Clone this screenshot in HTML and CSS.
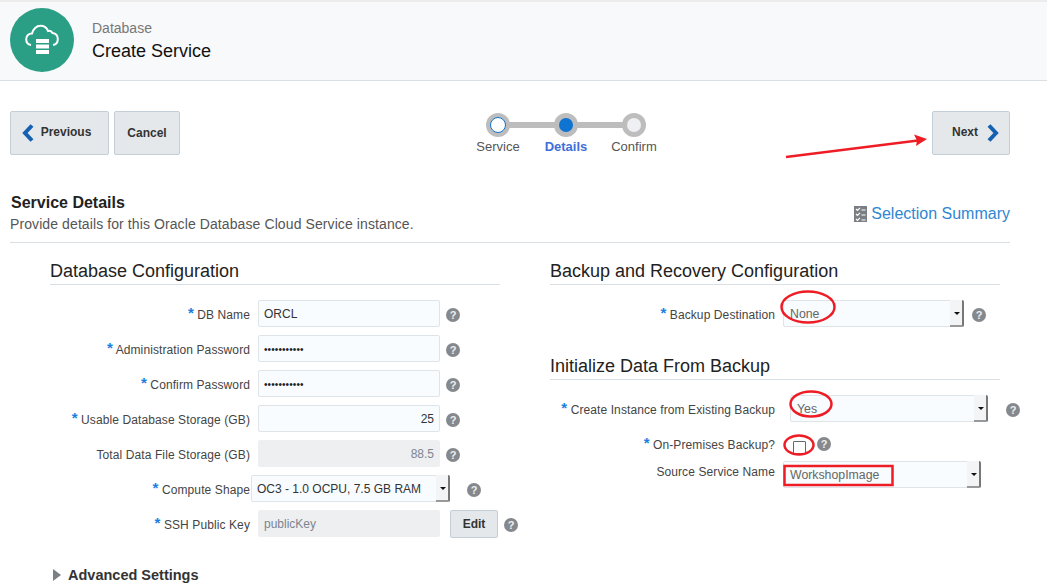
FILE: index.html
```html
<!DOCTYPE html>
<html lang="en">

<head>
    <meta charset="utf-8" />
    <title>Create Service</title>
    <link rel="stylesheet" href="styles.css">
</head>

<body>
    <div class="page">
        <header class="pageHeader">
            <div class="logo">
                <svg width="36" height="36" viewBox="0 0 36 36">
                    <path d="M7 23 C4 22.500 2.200 20 2.200 17 C2.200 13.800 4.800 11.300 8 11.500 C9 7 12.500 3.700 16.500 3.700 C20 3.700 22.800 5.800 24 9 C25.500 8.500 27.500 9 28.500 11 C31.800 11.500 33.800 14 33.800 17 C33.800 20 32 22.500 29 23" fill="none" stroke="#fff" stroke-width="2" />
                    <rect x="12" y="17" width="13" height="4" fill="#fff" />
                    <rect x="12" y="22.500" width="13" height="4" fill="#fff" />
                    <rect x="12" y="28" width="13" height="4" fill="#fff" />
                </svg>
            </div>
            <div class="titles">
                <div class="crumb">Database</div>
                <div class="pageTitle">Create Service</div>
            </div>
        </header>

        <div class="toolBar">
            <div class="navLeft">
                <button class="btn btnPrev">
                    <svg width="14" height="18" viewBox="0 0 14 18"><path d="M10 1.500 L3 9 L10 16.500" fill="none" stroke="#1560b0" stroke-width="4" /></svg>
                    Previous
                </button>
                <button class="btn btnCancel">Cancel</button>
            </div>
            <div class="train">
                <div class="trainLine"></div>
                <div class="stop">
                    <span class="dot dotVisited"></span>
                    <span class="stopLabel">Service</span>
                </div>
                <div class="stop">
                    <span class="dot dotCurrent"></span>
                    <span class="stopLabel stopCurrent">Details</span>
                </div>
                <div class="stop">
                    <span class="dot dotNext"></span>
                    <span class="stopLabel">Confirm</span>
                </div>
            </div>
            <button class="btn btnNext">
                Next
                <svg width="14" height="18" viewBox="0 0 14 18"><path d="M4 1.500 L11 9 L4 16.500" fill="none" stroke="#1560b0" stroke-width="4" /></svg>
            </button>
        </div>

        <section class="details">
            <div class="detailsHead">
                <div>
                    <h2 class="detailsTitle">Service Details</h2>
                    <p class="detailsSub">Provide details for this Oracle Database Cloud Service instance.</p>
                </div>
                <a class="summaryLink">
                    <svg width="13" height="16" viewBox="0 0 13 16">
                        <rect width="13" height="16" fill="#7b7f83" />
                        <path d="M2 3 L3.500 4.500 L6 1.800 M2 8 L3.500 9.500 L6 6.800 M2 13 L3.500 14.500 L6 11.800" fill="none" stroke="#fff" stroke-width="1.200" />
                        <path d="M7.500 4 H11.500 M7.500 9 H11.500 M7.500 14 H11.500" stroke="#fff" stroke-width="1.200" />
                    </svg>
                    Selection Summary
                </a>
            </div>
        </section>

        <main class="columns">
            <div class="column">
                <h3 class="groupTitle">Database Configuration</h3>
                <div class="formRow">
                    <label class="fieldLabel"><span class="req">*</span> DB Name</label>
                    <div class="input">ORCL</div>
                    <span class="help">?</span>
                </div>
                <div class="formRow">
                    <label class="fieldLabel"><span class="req">*</span> Administration Password</label>
                    <div class="input inputPwd">•••••••••••</div>
                    <span class="help">?</span>
                </div>
                <div class="formRow">
                    <label class="fieldLabel"><span class="req">*</span> Confirm Password</label>
                    <div class="input inputPwd">•••••••••••</div>
                    <span class="help">?</span>
                </div>
                <div class="formRow">
                    <label class="fieldLabel"><span class="req">*</span> Usable Database Storage (GB)</label>
                    <div class="input inputNum">25</div>
                    <span class="help">?</span>
                </div>
                <div class="formRow">
                    <label class="fieldLabel">Total Data File Storage (GB)</label>
                    <div class="input inputReadonly inputNum">88.5</div>
                    <span class="help">?</span>
                </div>
                <div class="formRow">
                    <label class="fieldLabel labelTight"><span class="req">*</span> Compute Shape</label>
                    <div class="select selectShape">OC3 - 1.0 OCPU, 7.5 GB RAM<span class="selectBtn"></span></div>
                    <span class="help helpShape">?</span>
                </div>
                <div class="formRow">
                    <label class="fieldLabel"><span class="req">*</span> SSH Public Key</label>
                    <div class="input inputReadonly">publicKey</div>
                    <button class="btn btnEdit">Edit</button>
                    <span class="help helpEdit">?</span>
                </div>
                <div class="advanced"><span class="twisty"></span>Advanced Settings</div>
            </div>

            <div class="column">
                <h3 class="groupTitle">Backup and Recovery Configuration</h3>
                <div class="formRow">
                    <label class="fieldLabel fieldLabelWide"><span class="req">*</span> Backup Destination</label>
                    <div class="select selectRight selectBackup">None<span class="selectBtn"></span></div>
                    <span class="help helpBackup">?</span>
                </div>

                <h3 class="groupTitle groupTitleNext">Initialize Data From Backup</h3>
                <div class="formRow">
                    <label class="fieldLabel fieldLabelWide"><span class="req">*</span> Create Instance from Existing Backup</label>
                    <div class="select selectRight selectYes">Yes<span class="selectBtn"></span></div>
                    <span class="help helpYes">?</span>
                </div>
                <div class="formRow formRowCheck">
                    <label class="fieldLabel fieldLabelWide"><span class="req">*</span> On-Premises Backup?</label>
                    <span class="checkbox"></span>
                    <span class="help helpCheck">?</span>
                </div>
                <div class="formRow formRowSource">
                    <label class="fieldLabel fieldLabelWide">Source Service Name</label>
                    <div class="select selectRight selectSource">WorkshopImage<span class="selectBtn"></span></div>
                </div>
            </div>
        </main>

        <svg class="marks" width="1047" height="587" viewBox="0 0 1047 587">
            <path d="M786 157 L918 140.500" stroke="#ee1c25" stroke-width="2.500" />
            <path d="M927 139 L914 134.500 L917 140.500 L916 146 Z" fill="#ee1c25" />
            <ellipse cx="808" cy="307" rx="26.500" ry="15.500" fill="none" stroke="#ee1c25" stroke-width="2.500" />
            <ellipse cx="811" cy="404" rx="20.500" ry="12.500" fill="none" stroke="#ee1c25" stroke-width="2.500" />
            <ellipse cx="799" cy="445" rx="14.500" ry="9.500" fill="none" stroke="#ee1c25" stroke-width="2.500" />
            <rect x="784.500" y="466" width="108" height="19" fill="none" stroke="#ee1c25" stroke-width="2.500" />
        </svg>
    </div>
</body>

</html>
```

FILE: styles.css
```css
* {
    box-sizing: border-box;
}

body {
    margin: 0;
    background: #fff;
    font-family: "Liberation Sans", Arial, sans-serif;
    color: #333;
    overflow: hidden;
}

.page {
    position: relative;
    width: 1047px;
    height: 587px;
    overflow: hidden;
}

.pageHeader {
    display: flex;
    align-items: center;
    height: 81px;
    padding-left: 10px;
    background: #f8f9fa;
    border-top: 2px solid #ececec;
    border-bottom: 1px solid #d9dfe3;
}

.logo {
    display: flex;
    align-items: center;
    justify-content: center;
    width: 64px;
    height: 64px;
    border-radius: 50%;
    background: #2a9f85;
    margin-top: -2px;
}

.titles {
    margin-left: 18px;
}

.crumb {
    font-size: 14px;
    line-height: 18px;
    color: #777;
}

.pageTitle {
    font-size: 18px;
    line-height: 26px;
    color: #111;
    margin-top: 1px;
}

.toolBar {
    display: flex;
    justify-content: space-between;
    align-items: flex-start;
    width: 1000px;
    margin: 30px 0 0 10px;
    position: relative;
}

.navLeft {
    display: flex;
    gap: 5px;
}

.btn {
    display: flex;
    align-items: center;
    justify-content: center;
    height: 44px;
    border: 1px solid #c4ced7;
    border-radius: 2px;
    background: #e4e8eb;
    font-family: inherit;
    font-size: 12px;
    font-weight: bold;
    color: #333;
    padding: 0;
}

.btnPrev {
    width: 99px;
    gap: 5px;
    padding-bottom: 3px;
    padding-right: 6px;
}

.btnPrev svg {
    margin-top: 2px;
}

.btnCancel {
    width: 66px;
}

.btnNext {
    width: 78px;
    gap: 7px;
    padding-bottom: 3px;
    padding-left: 9px;
}

.btnNext svg {
    margin-top: 2px;
}

.train {
    position: absolute;
    left: 454px;
    top: 2px;
    display: flex;
    width: 204px;
}

.trainLine {
    position: absolute;
    left: 34px;
    top: 9px;
    width: 136px;
    height: 6px;
    background: #bdbdbd;
}

.stop {
    position: relative;
    display: flex;
    flex-direction: column;
    align-items: center;
    width: 68px;
}

.dot {
    width: 24px;
    height: 24px;
    border-radius: 50%;
    background: #bdbdbd;
    display: flex;
    align-items: center;
    justify-content: center;
}

.dot::after {
    content: "";
    width: 14px;
    height: 14px;
    border-radius: 50%;
}

.dotVisited::after {
    background: #fff;
    border: 1px solid #0f73d2;
}

.dotCurrent::after {
    background: #0f73d2;
}

.dotNext::after {
    background: #eef0f3;
}

.stopLabel {
    font-size: 13px;
    line-height: 16px;
    color: #555;
    margin-top: 2px;
}

.stopCurrent {
    color: #3f6fd8;
    font-weight: bold;
}

.details {
    width: 1000px;
    margin: 37px 0 0 10px;
    border-bottom: 1px solid #d9dfe3;
    height: 51px;
}

.detailsHead {
    display: flex;
    justify-content: space-between;
}

.detailsTitle {
    margin: 1px 0 0 1px;
    font-size: 16px;
    line-height: 20px;
    color: #222;
}

.detailsSub {
    margin: 1px 0 0;
    font-size: 14px;
    line-height: 20px;
    letter-spacing: 0.095px;
    color: #555;
}

.summaryLink {
    display: flex;
    align-items: center;
    gap: 4px;
    height: 22px;
    margin-top: 11px;
    font-size: 16px;
    color: #2f86d2;
}

.columns {
    display: grid;
    grid-template-columns: 450px 450px;
    column-gap: 50px;
    margin: 17px 0 0 50px;
}

.groupTitle {
    margin: 0 0 15px;
    height: 25px;
    font-size: 18px;
    font-weight: normal;
    line-height: 22px;
    color: #222;
    border-bottom: 1px solid #d9dfe3;
}

.groupTitleNext {
    margin-top: 28px;
}

.formRow {
    display: flex;
    align-items: center;
    height: 27px;
    margin-bottom: 8px;
}

.fieldLabel {
    flex: none;
    width: 200px;
    margin-right: 8px;
    padding-top: 2px;
    text-align: right;
    font-size: 12px;
    letter-spacing: 0.1px;
    color: #444;
    white-space: nowrap;
}

.fieldLabelWide {
    width: 225px;
}

.labelTight {
    margin-right: 1px;
}

.req {
    position: relative;
    top: -1px;
    font-size: 15px;
    font-weight: bold;
    line-height: 10px;
    color: #1b7fe0;
}

.input {
    flex: none;
    width: 182px;
    height: 27px;
    padding: 0 5px;
    border: 1px solid #dfe4e8;
    border-radius: 2px;
    background: #f8fcff;
    font-size: 12px;
    line-height: 27px;
    color: #333;
}

.inputPwd {
    font-size: 10px;
    letter-spacing: 0.1px;
    color: #222;
}

.inputNum {
    text-align: right;
}

.inputReadonly {
    background: #eeeff1;
    border-color: #eeeff1;
    color: #7d8590;
}

.select {
    position: relative;
    flex: none;
    height: 27px;
    padding: 0 5px;
    border: 1px solid #dfe4e8;
    border-radius: 2px;
    background: #f8fcff;
    font-size: 12px;
    line-height: 27px;
    color: #666;
    white-space: nowrap;
}

.selectRight {
    padding: 1px 6px 0;
    line-height: 25px;
    font-size: 12.300px;
}

.selectBtn {
    position: absolute;
    right: -1px;
    top: -1px;
    width: 14px;
    height: 27px;
    background: #f2f4f5;
    border-right: 2px solid #777;
    border-bottom: 2px solid #999;
    border-radius: 0 2px 2px 0;
}

.selectBtn::after {
    content: "";
    position: absolute;
    left: 4px;
    top: 12px;
    border-left: 3px solid transparent;
    border-right: 3px solid transparent;
    border-top: 3px solid #111;
}

.selectShape {
    width: 199px;
    color: #333;
}

.selectBackup {
    width: 181px;
}

.selectYes {
    width: 198px;
    margin-left: 7px;
}

.selectSource {
    width: 198px;
}

.help {
    display: flex;
    align-items: center;
    justify-content: center;
    flex: none;
    width: 14px;
    height: 14px;
    margin-top: 2px;
    margin-left: 6px;
    border-radius: 50%;
    background: #85898d;
    font-size: 11px;
    font-weight: bold;
    color: #eee;
}

.helpShape {
    margin-left: 17px;
}

.helpEdit {
    margin-left: 6px;
}

.helpBackup {
    margin-left: 8px;
}

.helpYes {
    margin-left: 18px;
}

.helpCheck {
    margin-top: -2px;
    margin-left: 11px;
}

.btnEdit {
    flex: none;
    width: 48px;
    height: 28px;
    margin-left: 10px;
    padding: 0;
}

.advanced {
    display: flex;
    align-items: center;
    margin-top: 30px;
    font-size: 14.500px;
    font-weight: bold;
    color: #333;
}

.twisty {
    width: 0;
    height: 0;
    margin: 0 7px 0 3px;
    border-left: 8px solid #7b7f83;
    border-top: 6.500px solid transparent;
    border-bottom: 6.500px solid transparent;
}

.formRowCheck {
    margin-bottom: 0;
    height: 30px;
}

.formRowCheck .fieldLabel {
    padding-top: 0;
}

.checkbox {
    flex: none;
    width: 13px;
    height: 13px;
    margin: 4px 0 0 10px;
    border: 1px solid #666;
    border-radius: 1px;
    background: #fff;
}

.formRowSource {
    margin-top: 1px;
}

.formRowSource .fieldLabel {
    margin-top: -8px;
}

.marks {
    position: absolute;
    left: 0;
    top: 0;
    pointer-events: none;
}
```
